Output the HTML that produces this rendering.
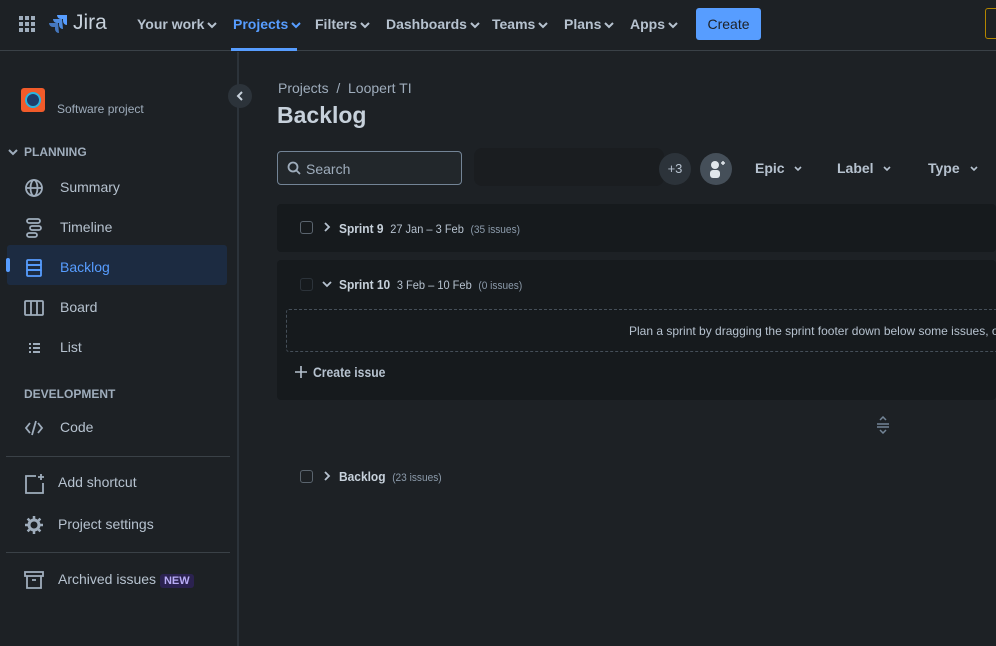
<!DOCTYPE html>
<html><head><meta charset="utf-8"><style>
*{margin:0;padding:0;box-sizing:border-box}
body{width:996px;height:646px;overflow:hidden;background:#1d2125;font-family:"Liberation Sans",sans-serif;color:#b6c2cf;position:relative}
.abs{position:absolute}
.nav{height:51px;border-bottom:1px solid #3a4147;}
.ni{position:absolute;top:16px;font-size:14px;color:#b6c2cf;font-weight:bold;white-space:nowrap}
.ni svg{vertical-align:middle;margin-left:3px}
.side{position:absolute;left:0;top:52px;width:239px;height:594px;border-right:2px solid #2c333a}
.si{position:absolute;left:24px;font-size:14px;color:#b6c2cf}
.si .t{position:absolute;left:36px;top:1px;white-space:nowrap}
.hd{position:absolute;left:24px;font-size:12px;font-weight:bold;color:#9fadbc}
.box{position:absolute;left:277px;width:719px;background:#161a1d;border-radius:4px}
.cb{position:absolute;width:13px;height:13px;border:1.5px solid #5a646e;border-radius:3px}
.nar{display:inline-block;transform:scaleX(.92);transform-origin:left}
</style></head><body>
<div class="nav"></div>
<svg class="abs" style="left:19px;top:16px" width="16" height="16" fill="#9fadbc"><g><rect x="0" y="0" width="4" height="4"/><rect x="6" y="0" width="4" height="4"/><rect x="12" y="0" width="4" height="4"/><rect x="0" y="6" width="4" height="4"/><rect x="6" y="6" width="4" height="4"/><rect x="12" y="6" width="4" height="4"/><rect x="0" y="12" width="4" height="4"/><rect x="6" y="12" width="4" height="4"/><rect x="12" y="12" width="4" height="4"/></g></svg>
<svg class="abs" style="left:48px;top:14px" width="20" height="20" fill="#579dff"><path d="M19 1H9a4 4 0 0 0 4 4h2v2a4 4 0 0 0 4 4z"/><path d="M14 5H5a4 4 0 0 0 4 4h2v2a4 4 0 0 0 4 4z" opacity=".85"/><path d="M10 9H1a4 4 0 0 0 4 4h2v2a4 4 0 0 0 4 4z" opacity=".7"/></svg>
<div class="abs" style="left:73px;top:11px;font-size:21px;color:#c7d1db">Jira</div>
<div class="ni" style="left:137px">Your work<svg width="10" height="8"><path d="M1 2l4 4 4-4" stroke="#b6c2cf" stroke-width="2" fill="none"/></svg></div>
<div class="ni" style="left:233px;color:#579dff">Projects<svg width="10" height="8"><path d="M1 2l4 4 4-4" stroke="#579dff" stroke-width="2" fill="none"/></svg></div>
<div class="abs" style="left:231px;top:48px;width:66px;height:3px;background:#579dff"></div>
<div class="ni" style="left:315px">Filters<svg width="10" height="8"><path d="M1 2l4 4 4-4" stroke="#b6c2cf" stroke-width="2" fill="none"/></svg></div>
<div class="ni" style="left:386px">Dashboards<svg width="10" height="8"><path d="M1 2l4 4 4-4" stroke="#b6c2cf" stroke-width="2" fill="none"/></svg></div>
<div class="ni" style="left:492px">Teams<svg width="10" height="8"><path d="M1 2l4 4 4-4" stroke="#b6c2cf" stroke-width="2" fill="none"/></svg></div>
<div class="ni" style="left:564px">Plans<svg width="10" height="8"><path d="M1 2l4 4 4-4" stroke="#b6c2cf" stroke-width="2" fill="none"/></svg></div>
<div class="ni" style="left:630px">Apps<svg width="10" height="8"><path d="M1 2l4 4 4-4" stroke="#b6c2cf" stroke-width="2" fill="none"/></svg></div>
<div class="abs" style="left:696px;top:8px;width:65px;height:32px;background:#579dff;border-radius:3px;color:#1d2125;font-size:14px;text-align:center;line-height:32px">Create</div>
<div class="abs" style="left:985px;top:8px;width:20px;height:31px;border:1.5px solid #b38600;border-radius:3px"></div>

<div class="side">
<div class="abs" style="left:21px;top:36px;width:24px;height:24px;background:#f15b2a;border-radius:3px"><div class="abs" style="left:4px;top:4px;width:16px;height:16px;border-radius:50%;background:#1d3d6b;border:2px solid #2ab4e0"></div></div>
<div class="abs" style="left:57px;top:50px;font-size:12px;color:#9fadbc">Software project</div>
<svg class="abs" style="left:8px;top:96px" width="10" height="8"><path d="M1 2l4 4 4-4" stroke="#9fadbc" stroke-width="2" fill="none"/></svg>
<div class="hd" style="top:93px">PLANNING</div>
<div class="si" style="top:126px"><svg width="20" height="20" fill="none" stroke="#9fadbc" stroke-width="1.8"><circle cx="10" cy="10" r="8"/><ellipse cx="10" cy="10" rx="3.5" ry="8"/><path d="M2 10h16"/></svg><span class="t">Summary</span></div>
<div class="si" style="top:166px"><svg width="20" height="20" fill="none" stroke="#9fadbc" stroke-width="1.8"><rect x="3" y="1" width="13" height="4" rx="2"/><rect x="6" y="8" width="11" height="4" rx="2"/><rect x="3" y="15" width="10" height="4" rx="2"/></svg><span class="t">Timeline</span></div>
<div class="abs" style="left:7px;top:193px;width:220px;height:40px;background:#1c2b41;border-radius:3px"></div>
<div class="abs" style="left:6px;top:206px;width:4px;height:14px;background:#579dff;border-radius:2px"></div>
<div class="si" style="top:206px;color:#579dff"><svg width="20" height="20" fill="none" stroke="#579dff" stroke-width="1.8"><rect x="3" y="2" width="14" height="5" rx="1"/><rect x="3" y="7" width="14" height="5"/><rect x="3" y="12" width="14" height="6" rx="1"/></svg><span class="t">Backlog</span></div>
<div class="si" style="top:246px"><svg width="20" height="20" fill="none" stroke="#9fadbc" stroke-width="1.8"><rect x="1" y="3" width="18" height="14" rx="1"/><path d="M7 3v14M13 3v14"/></svg><span class="t">Board</span></div>
<div class="si" style="top:286px"><svg width="20" height="20" fill="#9fadbc"><rect x="5" y="5" width="2" height="2"/><rect x="9" y="5" width="7" height="2"/><rect x="5" y="9" width="2" height="2"/><rect x="9" y="9" width="7" height="2"/><rect x="5" y="13" width="2" height="2"/><rect x="9" y="13" width="7" height="2"/></svg><span class="t">List</span></div>
<div class="hd" style="top:335px">DEVELOPMENT</div>
<div class="si" style="top:366px"><svg width="20" height="20" fill="none" stroke="#9fadbc" stroke-width="1.8"><path d="M6 5L2 10l4 5M14 5l4 5-4 5M12 3l-4 14"/></svg><span class="t">Code</span></div>
<div class="abs" style="left:6px;top:404px;width:224px;height:1px;background:#3a4147"></div>
<div class="si" style="top:421px;left:24px"><svg width="22" height="22" fill="none" stroke="#9fadbc" stroke-width="1.8"><path d="M12 3H2v17h17V10"/><path d="M17 1v6M14 4h6"/></svg><span class="t" style="left:34px">Add shortcut</span></div>
<div class="si" style="top:463px;left:24px"><svg width="20" height="20" fill="none" stroke="#9fadbc" stroke-width="3"><circle cx="10" cy="10" r="5"/><path d="M10 1v3M10 16v3M1 10h3M16 10h3M3.6 3.6l2 2M14.4 14.4l2 2M3.6 16.4l2-2M14.4 5.6l2-2" stroke-width="2.5"/></svg><span class="t" style="left:34px">Project settings</span></div>
<div class="abs" style="left:6px;top:500px;width:224px;height:1px;background:#3a4147"></div>
<div class="si" style="top:518px;left:24px"><svg width="20" height="20" fill="none" stroke="#9fadbc" stroke-width="1.8"><rect x="1" y="2" width="18" height="4"/><path d="M3 6v12h14V6M8 10h4"/></svg><span class="t" style="left:34px">Archived issues <span style="display:inline-block;background:#2b2250;color:#b8acf6;font-size:11px;font-weight:bold;padding:1px 4px;border-radius:3px">NEW</span></span></div>
</div>
<div class="abs" style="left:228px;top:84px;width:24px;height:24px;border-radius:50%;background:#2c333a"><svg width="24" height="24"><path d="M14 8l-4 4 4 4" stroke="#c7d1db" stroke-width="2" fill="none"/></svg></div>

<div class="abs" style="left:278px;top:80px;font-size:14px;color:#9fadbc">Projects &nbsp;/&nbsp; Loopert TI</div>
<div class="abs" style="left:277px;top:102px;font-size:23px;font-weight:bold;color:#c7d1db">Backlog</div>
<div class="abs" style="left:277px;top:151px;width:185px;height:34px;border:1.5px solid #738496;border-radius:4px;background:#22272b"><svg class="abs" style="left:9px;top:9px" width="14" height="14" fill="none" stroke="#9fadbc" stroke-width="1.8"><circle cx="6" cy="6" r="4.5"/><path d="M9.5 9.5l3.5 3.5"/></svg><span class="abs" style="left:28px;top:9px;font-size:14px;color:#9fadbc">Search</span></div>
<div class="abs" style="left:474px;top:148px;width:190px;height:38px;background:#1a1d20;border-radius:8px"></div>
<div class="abs" style="left:659px;top:153px;width:32px;height:32px;border-radius:50%;background:#2c333a;font-size:13px;text-align:center;line-height:32px;color:#b6c2cf">+3</div>
<div class="abs" style="left:700px;top:153px;width:32px;height:32px;border-radius:50%;background:#454f59"><svg width="32" height="32" fill="#e0e6eb"><circle cx="15" cy="12" r="4"/><rect x="10" y="17" width="10" height="8" rx="3"/><path d="M21 10h4M23 8v4" stroke="#e0e6eb" stroke-width="1.5"/></svg></div>
<div class="ni" style="left:755px;top:160px;font-size:14px">Epic <svg width="14" height="8"><path d="M4 2l3 3 3-3" stroke="#b6c2cf" stroke-width="1.6" fill="none"/></svg></div>
<div class="ni" style="left:837px;top:160px;font-size:14px">Label <svg width="14" height="8"><path d="M4 2l3 3 3-3" stroke="#b6c2cf" stroke-width="1.6" fill="none"/></svg></div>
<div class="ni" style="left:928px;top:160px;font-size:14px">Type <svg width="14" height="8"><path d="M4 2l3 3 3-3" stroke="#b6c2cf" stroke-width="1.6" fill="none"/></svg></div>

<div class="box" style="top:204px;height:48px"></div>
<div class="cb" style="left:300px;top:221px"></div>
<svg class="abs" style="left:322px;top:222px" width="10" height="10"><path d="M3 1l4 4-4 4" stroke="#b6c2cf" stroke-width="1.8" fill="none"/></svg>
<div class="abs" style="left:339px;top:221px;font-size:13px;white-space:nowrap"><span class="nar"><b style="color:#c7d1db">Sprint 9</b>&nbsp; <span style="font-size:12px">27 Jan – 3 Feb</span> &nbsp;<span style="font-size:11px;color:#8c9bab">(35 issues)</span></span></div>

<div class="box" style="top:260px;height:140px"></div>
<div class="cb" style="left:300px;top:278px;border-color:#2c333a"></div>
<svg class="abs" style="left:322px;top:279px" width="10" height="10"><path d="M1 3l4 4 4-4" stroke="#b6c2cf" stroke-width="1.8" fill="none"/></svg>
<div class="abs" style="left:339px;top:277px;font-size:13px;white-space:nowrap"><span class="nar"><b style="color:#c7d1db">Sprint 10</b>&nbsp; <span style="font-size:12px">3 Feb – 10 Feb</span> &nbsp;<span style="font-size:11px;color:#8c9bab">(0 issues)</span></span></div>
<div class="abs" style="left:286px;top:309px;width:720px;height:43px;border:1px dashed #454f59;border-radius:3px"></div>
<div class="abs" style="left:629px;top:324px;font-size:12px;white-space:nowrap;color:#b6c2cf">Plan a sprint by dragging the sprint footer down below some issues, or</div>
<svg class="abs" style="left:295px;top:366px" width="12" height="12" stroke="#b6c2cf" stroke-width="1.6"><path d="M6 0v12M0 6h12"/></svg>
<div class="abs" style="left:313px;top:364px;font-size:14px;font-weight:bold;color:#b6c2cf;white-space:nowrap"><span class="nar" style="transform:scaleX(.87)">Create issue</span></div>
<svg class="abs" style="left:875px;top:416px" width="16" height="18" fill="none" stroke="#738496" stroke-width="1.5"><path d="M5 4l3-3 3 3M2 8h12M2 11h12M5 14l3 3 3-3"/></svg>

<div class="cb" style="left:300px;top:470px"></div>
<svg class="abs" style="left:322px;top:471px" width="10" height="10"><path d="M3 1l4 4-4 4" stroke="#b6c2cf" stroke-width="1.8" fill="none"/></svg>
<div class="abs" style="left:339px;top:469px;font-size:13px;white-space:nowrap"><span class="nar"><b style="color:#c7d1db">Backlog</b>&nbsp; <span style="font-size:11px;color:#8c9bab">(23 issues)</span></span></div>
</body></html>
